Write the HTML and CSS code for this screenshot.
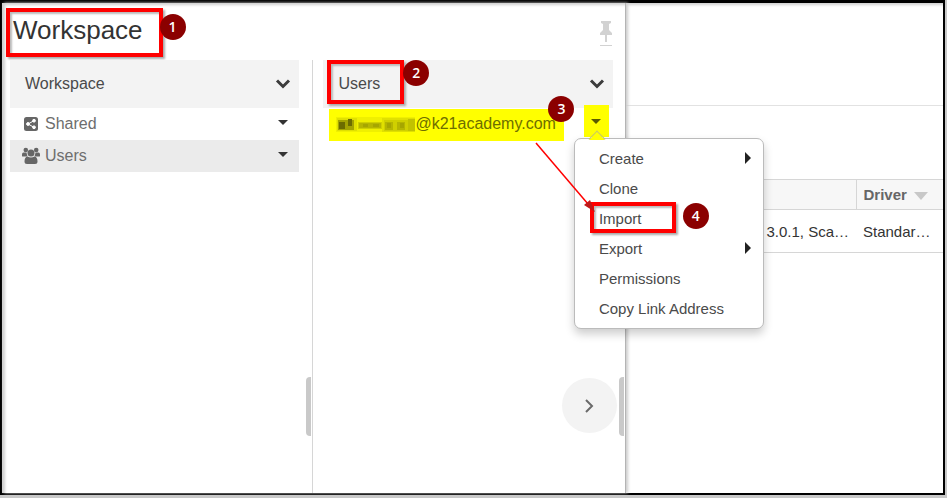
FILE: index.html
```
<!DOCTYPE html>
<html lang="en">
  <head>
    <meta charset="UTF-8" />
    <meta name="viewport" content="width=device-width, initial-scale=1.0" />
    <title>Workspace</title>
    <link rel="stylesheet" href="styles.css">
  </head>
  <body>
    <div class="frame">
      <aside class="drawer">
        <header class="drawer-header">
          <h1 class="callout">Workspace<span class="badge badge-title">1</span></h1>
          <button class="pin" type="button" aria-label="Pin">
            <svg width="14" height="26" viewBox="0 0 14 26">
              <path d="M2 0h10v2l-2 1v6l3 3v2H8v7H6v-7H1v-2l3-3V3L2 2z" />
              <path d="M1 24h12v1H1z" />
            </svg>
          </button>
        </header>

        <div class="columns">
          <section class="column">
            <div class="column-header">
              <h2>Workspace</h2>
              <button class="toggle" type="button" aria-label="Workspace options">
                <svg width="16" height="12" viewBox="0 0 16 12"><path class="chevron" d="M2 2.5l6 6 6-6" /></svg>
              </button>
            </div>
            <ul class="tree">
              <li>
                <svg class="icon" width="18" height="18" viewBox="0 0 18 18">
                  <rect x="2" y="2" width="14" height="14" rx="2.5" />
                  <g class="icon-cut">
                    <path d="M12 5.700L6 9l6 3.300" />
                    <circle cx="12" cy="5.700" r="1.400" />
                    <circle cx="6" cy="9" r="1.400" />
                    <circle cx="12" cy="12.300" r="1.400" />
                  </g>
                </svg>
                <a href="#">Shared</a>
                <button class="toggle" type="button" aria-label="Shared options"><span class="caret"></span></button>
              </li>
              <li class="selected">
                <svg class="icon" width="18" height="18" viewBox="0 0 18 18">
                  <circle cx="3.800" cy="3" r="2.300" />
                  <circle cx="14.200" cy="3" r="2.300" />
                  <path d="M0 9V7.500Q0 5.500 1.500 5.500h3Q5 8 5.500 9.500H1Q0 9.500 0 9zM18 9V7.500q0-2-1.500-2h-3Q13 8 12.500 9.500H17q1 0 1-.5z" />
                  <circle cx="9" cy="6" r="3.500" />
                  <path d="M5.500 9.500Q9 11.500 12.500 9.500 15.500 10 15.500 14.500q0 2.500-2.500 2.500H5q-2.500 0-2.500-2.500Q2.500 10 5.500 9.500z" />
                </svg>
                <a href="#">Users</a>
                <button class="toggle" type="button" aria-label="Users options"><span class="caret"></span></button>
              </li>
            </ul>
            <span class="handle"></span>
          </section>

          <section class="column">
            <div class="column-header">
              <h2 class="callout">Users<span class="badge badge-column">2</span></h2>
              <button class="toggle" type="button" aria-label="Users column options">
                <svg width="16" height="12" viewBox="0 0 16 12"><path class="chevron" d="M2 2.5l6 6 6-6" /></svg>
              </button>
            </div>
            <div class="user-row">
              <a class="user" href="#">
                <svg class="redacted" width="79" height="20" viewBox="0 0 79 20">
                  <path fill="#f0f000" d="M0 2h79v15H0z" />
                  <path fill="#e0e000" d="M1 3h20v13H1zM46 3h33v14H46z" />
                  <path fill="#d0d000" d="M22 7h24v7H22zM48 5h31v11H48z" />
                  <path fill="#a4a400" d="M2 5h16v10H2z" />
                  <path fill="#6c6c00" d="M3 7h6v7H3zM12 4h4v7h-4z" />
                  <path fill="#b6b600" d="M23 8h22v5H23zM49 7h8v8h-8zM61 7h8v8h-8z" />
                  <path fill="#a6a600" d="M27 9h5v3h-5zM37 9h6v3h-6zM51 8h4v5h-4zM64 8h4v5h-4z" />
                  <path fill="#c2c200" d="M72 4h7v12h-7z" />
                </svg>
                <span>@k21academy.com</span>
                <span class="badge badge-user">3</span>
              </a>
              <button class="toggle marked" type="button" aria-label="User options"><span class="caret"></span></button>

              <div class="menu">
                <ul>
                  <li><button type="button">Create<span class="submenu"></span></button></li>
                  <li><button type="button">Clone</button></li>
                  <li>
                    <button type="button">Import</button>
                    <span class="callout menu-callout"><span class="badge badge-menu">4</span></span>
                  </li>
                  <li><button type="button">Export<span class="submenu"></span></button></li>
                  <li><button type="button">Permissions</button></li>
                  <li><button type="button">Copy Link Address</button></li>
                </ul>
              </div>
              <svg class="arrow" width="62" height="72" viewBox="0 0 62 72">
                <path class="arrow-line" d="M1 1l52 61" />
                <path class="arrow-head" d="M60 70l-11-7 6-5z" />
              </svg>
            </div>
            <button class="next" type="button" aria-label="Next">
              <svg width="10" height="14" viewBox="0 0 10 14"><path d="M2 1l6 6-6 6" /></svg>
            </button>
            <span class="handle"></span>
          </section>
        </div>
      </aside>

      <main>
        <div class="toolbar"></div>
        <table>
          <thead>
            <tr>
              <th class="runtime" aria-label="Runtime"></th>
              <th class="driver">Driver <span class="sort"></span></th>
            </tr>
          </thead>
          <tbody>
            <tr>
              <td class="runtime">3.0.1, Sca…</td>
              <td>Standar…</td>
            </tr>
          </tbody>
        </table>
      </main>
    </div>
  </body>
</html>
```
FILE: styles.css
```
:root {
  --mark-color: #ff0000;
  --badge-color: #8b0000;
  --highlight-color: #ffff00;
  --line-color: #d6d6d6;
  --text-color: #4a4a4a;
}

* {
  box-sizing: border-box;
}

body {
  margin: 0;
  min-height: 100vh;
  padding: 0 2px 3px 0;
  display: flex;
  background: #c8c8c8;
  font-family: "Liberation Sans", Arial, sans-serif;
  font-size: 16px;
  color: var(--text-color);
}

h1,
h2,
ul {
  margin: 0;
  padding: 0;
  font-weight: normal;
  list-style: none;
}

button {
  border: 0;
  padding: 0;
  background: none;
  font: inherit;
  color: inherit;
  cursor: pointer;
}

a {
  color: inherit;
  text-decoration: none;
}

svg {
  display: block;
}

.frame {
  flex: 1;
  display: flex;
  border: 2px solid #000;
  border-top-width: 3px;
  background: #fff;
  box-shadow: inset 4px 3px 3px -1px #d0d0d0;
}

/* numbered steps */

.callout {
  position: relative;
  border: 4px solid var(--mark-color);
  box-shadow: 2px 2px 2px #aaa, inset 2px 2px 2px #bbb;
}

.badge {
  position: absolute;
  width: 26px;
  height: 26px;
  border-radius: 50%;
  background: var(--badge-color);
  color: #fff;
  font-family: "Open Sans", sans-serif;
  font-size: 14px;
  font-weight: 600;
  line-height: 26px;
  text-align: center;
}

.badge-title {
  top: 2px;
  right: -27px;
}

.badge-column {
  top: -4px;
  right: -29px;
}

.badge-user {
  top: -13px;
  right: -10px;
}

.badge-menu {
  top: -3px;
  right: -37px;
}

/* drawer */

.drawer {
  flex: 0 0 66.3%;
  display: flex;
  flex-direction: column;
  position: relative;
  z-index: 1;
  border-right: 1px solid #b4b4b4;
  box-shadow: 2px 0 3px #ccc;
}

.drawer-header {
  display: flex;
  justify-content: space-between;
  align-items: flex-start;
  padding: 5px 12px 3px 4px;
}

h1 {
  padding: 0 16px 4px 3px;
  font-size: 26px;
  line-height: 37px;
  color: #333;
}

.pin {
  margin-top: 13px;
}

.pin path {
  fill: #d2d2d2;
}

.columns {
  flex: 1;
  display: grid;
  grid-template-columns: 1fr 1fr;
}

.column {
  position: relative;
  padding: 0 13px 0 8px;
  border-right: 1px solid var(--line-color);
}

.column + .column {
  padding: 0 12px 0 10px;
  border-right: 0;
}

.column-header {
  display: flex;
  justify-content: space-between;
  height: 48px;
  background: #f3f3f3;
}

h2 {
  padding-left: 15px;
  font-size: 16px;
  line-height: 48px;
}

h2.callout {
  height: 44px;
  margin-left: 4px;
  padding: 4px 20px 0 7px;
  line-height: 32px;
}

.toggle {
  display: flex;
  justify-content: center;
  align-items: center;
  width: 32px;
}

.chevron {
  fill: none;
  stroke: #3c3c3c;
  stroke-width: 3;
}

.caret {
  margin-bottom: 4px;
  border: 5px solid transparent;
  border-top-color: #333;
  border-bottom: 0;
}

.tree li {
  display: flex;
  align-items: stretch;
  height: 32px;
  padding-left: 12px;
  line-height: 32px;
  color: #6e6e6e;
}

.tree .selected {
  background: #ebebeb;
}

.tree a {
  flex: 1;
  padding-left: 5px;
}

.icon {
  align-self: center;
  fill: #666;
}

.icon-cut {
  fill: #fff;
  stroke: #fff;
}

.icon-cut path {
  fill: none;
}

.handle {
  position: absolute;
  right: 1px;
  bottom: 57px;
  width: 5px;
  height: 59px;
  border-radius: 4px 0 0 4px;
  background: #c9c9c9;
}

.next {
  position: absolute;
  right: 8px;
  bottom: 60px;
  display: flex;
  justify-content: center;
  align-items: center;
  width: 55px;
  height: 55px;
  border-radius: 50%;
  background: #f3f3f3;
}

.next path {
  fill: none;
  stroke: #6a6a6a;
  stroke-width: 2;
}

/* user row */

.user-row {
  position: relative;
  display: flex;
  justify-content: space-between;
  margin-top: 1px;
  padding: 0 4px 0 6px;
}

.user {
  position: relative;
  display: flex;
  align-items: center;
  width: 235px;
  height: 32px;
  padding-left: 7px;
  background: var(--highlight-color);
  line-height: 28px;
  color: #6e6e00;
}

.user span:not(.badge) {
  padding-bottom: 2px;
}

.toggle.marked {
  width: 25px;
  height: 32px;
  margin-top: -4px;
  background: var(--highlight-color);
}

.toggle.marked .caret {
  margin-bottom: 0;
  border-top-color: #5a5a00;
}

.menu {
  position: absolute;
  top: 29px;
  right: -151px;
  width: 190px;
  padding: 4px 0 5px;
  border: 1px solid #bbb;
  border-radius: 7px;
  background: #fff;
  box-shadow: 0 5px 10px #0003;
}

.menu::before {
  content: '';
  position: absolute;
  top: -6px;
  left: 16px;
  width: 11px;
  height: 11px;
  border: 1px solid #c8c864;
  border-width: 1px 0 0 1px;
  background: linear-gradient(135deg, var(--highlight-color) 50%, #fff 50%);
  transform: rotate(45deg);
}

.menu li {
  position: relative;
}

.menu button {
  display: flex;
  justify-content: space-between;
  align-items: center;
  width: 100%;
  height: 30px;
  padding: 0 12px 0 24px;
  font-size: 15px;
}

.submenu {
  border: 6px solid transparent;
  border-left-color: #222;
  border-right: 0;
}

.menu-callout {
  position: absolute;
  inset: -1px 87px 0 15px;
  pointer-events: none;
}

.arrow {
  position: absolute;
  top: 33px;
  left: 212px;
}

.arrow-line {
  stroke: #f00;
  stroke-width: 1.5;
}

.arrow-head {
  fill: #c01818;
}

/* clusters table behind the drawer */

main {
  flex: 1;
  min-width: 0;
}

.toolbar {
  height: 103px;
  margin-bottom: 73px;
  border-bottom: 1px solid #e2e2e2;
}

table {
  width: 100%;
  table-layout: fixed;
  border-collapse: collapse;
  font-size: 15px;
  text-align: left;
  color: #333;
}

tr {
  border: 1px solid var(--line-color);
  border-width: 1px 0;
}

th,
td {
  padding: 0 7px;
  white-space: nowrap;
}

th {
  height: 30px;
  background: #f7f7f7;
  color: #666;
}

td {
  height: 43px;
}

.driver {
  width: 87px;
  border-left: 1px solid var(--line-color);
}

.runtime {
  text-align: right;
}

.sort {
  display: inline-block;
  margin-left: 3px;
  border: 7px solid transparent;
  border-top: 8px solid #c8c8c8;
  border-bottom: 0;
}
```
